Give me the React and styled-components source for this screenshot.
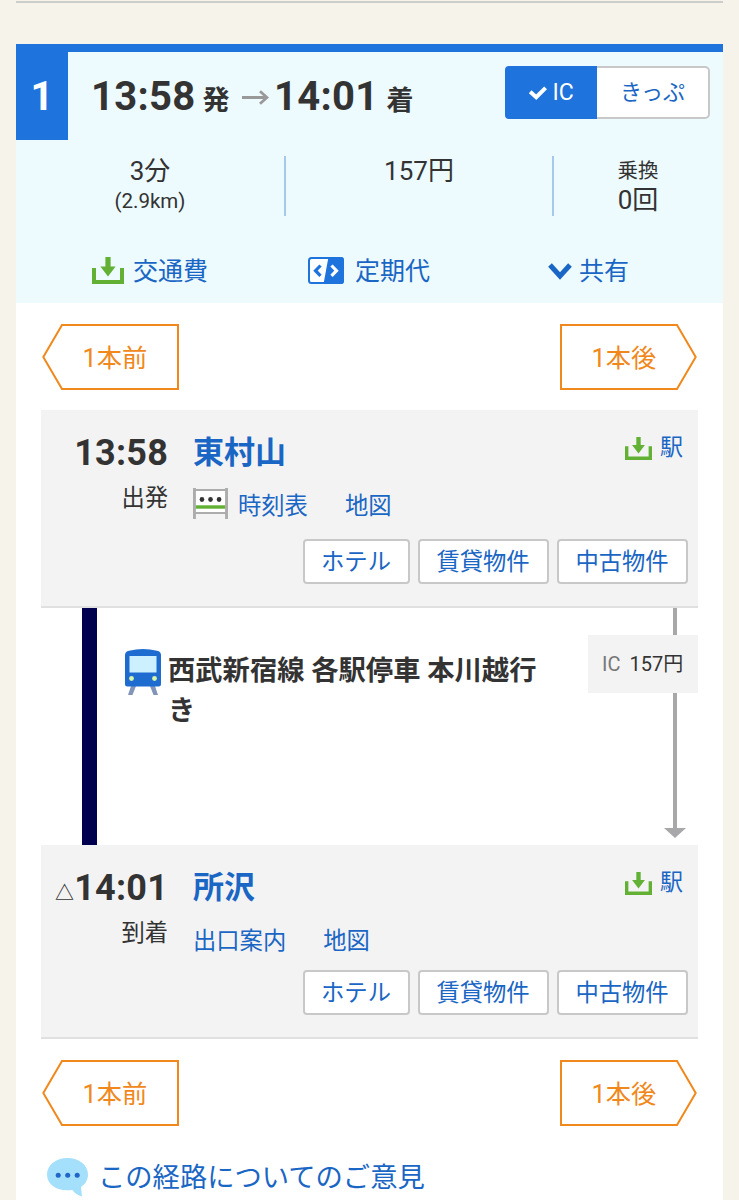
import React from "react";
import styled, { createGlobalStyle } from "styled-components";

const color = {
  blue: "#1f73dc",
  link: "#1a66c4",
  ink: "#333333",
  orange: "#f0881c",
  green: "#62b135",
  panel: "#f3f3f3",
  border: "#c8c8c8",
  lane: "#a8a8ab",
};

const GlobalStyle = createGlobalStyle`
  * { box-sizing: border-box; }
  body {
    margin: 0;
    background: #f6f3ea;
    color: ${color.ink};
    font-family: Roboto, "Noto Sans CJK JP", sans-serif;
    font-weight: 400;
  }
  a { color: ${color.link}; text-decoration: none; }
  svg { display: block; flex: none; }
`;

const Page = styled.div`
  height: 1200px;
  overflow: hidden;
  padding: 1px 16px 0 16px;
`;

const Rule = styled.div`
  height: 2px;
  margin-bottom: 41px;
  background: #cbcecb;
`;

const Card = styled.article`
  height: 1156px;
  border-top: 8px solid ${color.blue};
  background: #fff;
`;

const Summary = styled.header`
  height: 251px;
  background: #edfafe;
`;

const Headline = styled.div`
  display: flex;
  height: 88px;
`;

const Rank = styled.div`
  width: 52px;
  padding-top: 23px;
  background: ${color.blue};
  color: #fff;
  font-size: 40px;
  font-weight: 700;
  line-height: 44px;
  text-align: center;
`;

const Times = styled.div`
  display: flex;
  align-items: baseline;
  width: 437px;
  padding: 23px 0 0 23px;
  font-size: 40px;
  font-weight: 700;
  letter-spacing: 0.3px;
  line-height: 44px;
  white-space: nowrap;

  svg {
    align-self: flex-start;
    margin: 15px 5px 0 0;
  }
`;

const TimeMark = styled.span`
  margin: ${(p) => p.$margin};
  font-size: 27px;
`;

const Toggle = styled.div`
  display: flex;
  width: 205px;
  height: 53px;
  margin-top: 14px;
`;

const ToggleOption = styled.button`
  display: flex;
  align-items: center;
  justify-content: center;
  gap: 5px;
  width: ${(p) => (p.$active ? 92 : 113)}px;
  padding: 0 0 ${(p) => (p.$active ? 0 : 6)}px;
  border: 2px solid ${(p) => (p.$active ? color.blue : color.border)};
  border-left-width: ${(p) => (p.$active ? 2 : 0)}px;
  border-radius: ${(p) => (p.$active ? "4px 0 0 4px" : "0 5px 5px 0")};
  background: ${(p) => (p.$active ? color.blue : "#fff")};
  color: ${(p) => (p.$active ? "#fff" : color.link)};
  font-family: inherit;
  font-size: ${(p) => (p.$active ? 23 : 22)}px;
`;

const Stats = styled.div`
  display: grid;
  grid-template-columns: 270px 268px 168px;
  height: 60px;
  margin-top: 16px;
`;

const Stat = styled.div`
  border-right: ${(p) => (p.$last ? "none" : "2px solid #a5c9ea")};
  font-size: 26px;
  line-height: ${(p) => (p.$last ? 29 : 30)}px;
  text-align: center;
`;

const StatNote = styled.div`
  font-size: 20.5px;
  line-height: 30px;
`;

const Actions = styled.nav`
  display: flex;
  height: 40px;
  margin-top: 36px;
  padding-left: 76px;
`;

const Action = styled.a`
  display: flex;
  align-items: center;
  gap: ${(p) => p.$gap}px;
  width: ${(p) => p.$width}px;
  font-size: 25px;
  line-height: 40px;
  white-space: nowrap;

  svg { margin-bottom: 3px; }
`;

const Shift = styled.div`
  display: flex;
  justify-content: space-between;
  padding: 21px 26px 0 26px;
`;

const ShiftLink = styled.a`
  position: relative;
  display: block;
  width: 137px;
  height: 66px;
  padding-left: ${(p) => (p.$back ? 9 : 0)}px;
  padding-right: ${(p) => (p.$back ? 0 : 9)}px;
  font-size: 25.3px;
  line-height: 69px;
  text-align: center;

  && { color: ${color.orange}; }
  svg { position: absolute; inset: 0; }
`;

const Route = styled.section`
  margin: 20px 25px 0 25px;
`;

const Station = styled.div`
  display: grid;
  grid-template-columns: 127px 1fr;
  column-gap: 25px;
  align-content: start;
  height: ${(p) => p.$height}px;
  padding: 18px 10px 0 0;
  border-bottom: 2px solid #e0e0e0;
  background: ${color.panel};
`;

const StationTime = styled.div`
  display: flex;
  align-items: baseline;
  justify-content: flex-end;
  height: 48px;
  font-size: 36px;
  font-weight: 700;
  letter-spacing: 0.2px;
  line-height: 50px;
  white-space: nowrap;
`;

const Approx = styled.span`
  font-size: 19px;
  font-weight: 500;
  line-height: 1;
`;

const StationRow = styled.div`
  display: flex;
  justify-content: space-between;
  height: 48px;
`;

const StationName = styled.a`
  font-size: 31px;
  font-weight: 700;
  line-height: 50px;
`;

const StationSave = styled.a`
  display: flex;
  align-items: flex-start;
  gap: 8px;
  padding-right: 5px;
  font-size: 23px;
  line-height: 40px;

  svg { margin-top: 9px; }
`;

const StationPhase = styled.div`
  font-size: 23.3px;
  line-height: 44px;
  text-align: right;
`;

const StationLinks = styled.div`
  display: flex;
  align-items: flex-start;
  gap: 37px;
  height: 62px;
  font-size: 23.3px;
  line-height: 60px;

  svg { margin-top: 12px; }
`;

const TimetableLink = styled.a`
  display: flex;
  gap: 10px;
`;

const Chips = styled.div`
  display: flex;
  grid-column: 1 / -1;
  justify-content: flex-end;
  gap: 8px;
  margin-top: ${(p) => p.$top}px;
`;

const Chip = styled.a`
  width: ${(p) => p.$width}px;
  height: 45px;
  padding-right: 1px;
  border: 2px solid ${color.border};
  border-radius: 4px;
  background: #fff;
  font-size: 23.3px;
  line-height: 43px;
  text-align: center;
`;

const Segment = styled.div`
  display: flex;
  height: 237px;
`;

const LineBar = styled.div`
  width: 15px;
  margin: 0 28px 0 41px;
  background: #00004f;
`;

const LineInfo = styled.div`
  display: flex;
  gap: 7px;
  width: 463px;
  padding-top: 41px;
`;

const LineName = styled.div`
  width: 380px;
  padding-top: 2px;
  font-size: 27.3px;
  font-weight: 700;
  line-height: 40px;
`;

const FareLane = styled.div`
  display: flex;
  flex-direction: column;
  width: 110px;
`;

const LaneLine = styled.div`
  width: 4px;
  height: ${(p) => p.$height}px;
  margin-left: 85px;
  background: ${color.lane};
`;

const LaneArrow = styled.div`
  width: 22px;
  height: 10px;
  margin-left: 76px;
  background: ${color.lane};
  clip-path: polygon(0 0, 100% 0, 50% 100%);
`;

const Fare = styled.div`
  display: flex;
  gap: 9px;
  height: 58px;
  padding-left: 14px;
  background: ${color.panel};
  font-size: 20px;
  line-height: 58px;
  white-space: nowrap;
`;

const FareKind = styled.span`
  color: #777;
`;

const Feedback = styled.a`
  display: flex;
  align-items: flex-start;
  gap: 10px;
  margin: 29px 0 0 31px;
  font-size: 27.3px;
  line-height: 46px;

  svg { margin-top: 3px; }
`;

function SaveIcon({ width = 32, height = 27 }) {
  return (
    <svg width={width} height={height} viewBox="0 0 32 27" preserveAspectRatio="none" fill={color.green}>
      <path d="M0 11h4v12h24V11h4v16H0z" />
      <path d="M13.4 0h5.2v9.5h5L16 19.5 8.4 9.5h5z" />
    </svg>
  );
}

function PassIcon() {
  return (
    <svg width="36" height="27" viewBox="0 0 36 27" fill="none">
      <rect x="1" y="1" width="34" height="25" rx="2.5" fill="#fff" stroke={color.blue} strokeWidth="2" />
      <path d="M20.5 0H33a3 3 0 0 1 3 3v21a3 3 0 0 1-3 3H15.5z" fill={color.blue} />
      <path d="M12.5 8.5l-5 5.2 5 5.2" stroke={color.blue} strokeWidth="3.2" />
      <path d="M23.5 8.5l5 5.2-5 5.2" stroke="#fff" strokeWidth="3.2" />
    </svg>
  );
}

function ChevronIcon() {
  return (
    <svg width="24" height="18" viewBox="0 0 24 18" fill="none">
      <path d="M2 3l10 11L22 3" stroke={color.link} strokeWidth="5" />
    </svg>
  );
}

function CheckIcon() {
  return (
    <svg width="19" height="15" viewBox="0 0 19 15" fill="none">
      <path d="M2.2 6.8l6 5.4L17.6 2.8" stroke="#fff" strokeWidth="4" />
    </svg>
  );
}

function ArrowIcon() {
  return (
    <svg width="27" height="15" viewBox="0 0 27 15" fill="none" stroke="#999" strokeWidth="2.8">
      <path d="M0 7.5h25M18 1.2l7 6.3-7 6.3" />
    </svg>
  );
}

function TimetableIcon() {
  return (
    <svg width="35" height="31" viewBox="0 0 36 31" preserveAspectRatio="none">
      <rect x="2" y="2" width="32" height="24" fill="#fff" />
      <path d="M0 0h3v1h30V0h3v31h-3v-5H3v5H0z M3 3v21h30V3z" fill="#adadad" fillRule="evenodd" />
      <rect x="3" y="17.3" width="30" height="3.4" fill={color.green} />
      <g fill="#333">
        <circle cx="9.2" cy="11.5" r="2.4" />
        <circle cx="18" cy="11.5" r="2.4" />
        <circle cx="26.8" cy="11.5" r="2.4" />
      </g>
    </svg>
  );
}

function TrainIcon() {
  return (
    <svg width="36" height="46" viewBox="0 0 36 46">
      <path d="M6 37h5L7.5 46H3zM25 37h5l3 9h-4.5z" fill="#8295b8" />
      <path d="M0 6Q0 2.5 4 1.7Q18-1.7 32 1.7Q36 2.5 36 6V35a2.5 2.5 0 0 1-2.5 2.5H2.5A2.5 2.5 0 0 1 0 35z" fill="#1f6cd0" />
      <rect x="4.5" y="7" width="27" height="16.5" fill="#cdf0ff" />
      <circle cx="6.5" cy="29.5" r="2.4" fill="#d8f6a8" />
      <circle cx="29.5" cy="29.5" r="2.4" fill="#d8f6a8" />
    </svg>
  );
}

function CommentIcon() {
  return (
    <svg width="41" height="39" viewBox="0 0 41 39">
      <path d="M20.5 0C32 0 41 7 41 16.5c0 5.5-2.500 9.500-7 12.500l1 9.500c-4-1-7.500-3.500-9.500-6.500C11.500 34 0 27.500 0 16.500 0 7 9 0 20.500 0z" fill="#a4e0fc" />
      <g fill="#1f66c8">
        <circle cx="11.2" cy="17.3" r="2.5" />
        <circle cx="20.7" cy="17.3" r="2.5" />
        <circle cx="30.2" cy="17.3" r="2.5" />
      </g>
    </svg>
  );
}

function ShiftLinks() {
  return (
    <Shift>
      <ShiftLink href="#" $back>
        <svg width="137" height="66" viewBox="0 0 137 66" fill="none" stroke={color.orange} strokeWidth="2">
          <path d="M1.3 33L20 1H136V65H20z" />
        </svg>
        1本前
      </ShiftLink>
      <ShiftLink href="#">
        <svg width="137" height="66" viewBox="0 0 137 66" fill="none" stroke={color.orange} strokeWidth="2">
          <path d="M135.7 33L117 1H1V65H117z" />
        </svg>
        1本後
      </ShiftLink>
    </Shift>
  );
}

function PropertyChips({ top }) {
  return (
    <Chips $top={top}>
      <Chip href="#" $width={107}>ホテル</Chip>
      <Chip href="#" $width={131}>賃貸物件</Chip>
      <Chip href="#" $width={131}>中古物件</Chip>
    </Chips>
  );
}

function SaveStation() {
  return (
    <StationSave href="#">
      <SaveIcon width={27} height={23} />
      駅
    </StationSave>
  );
}

export default function App() {
  return (
    <>
      <GlobalStyle />
      <Page>
        <Rule />
        <Card>
          <Summary>
            <Headline>
              <Rank>1</Rank>
              <Times>
                13:58
                <TimeMark $margin="0 12px 0 7px">発</TimeMark>
                <ArrowIcon />
                <span>14:01</span>
                <TimeMark $margin="0 0 0 8px">着</TimeMark>
              </Times>
              <Toggle>
                <ToggleOption $active>
                  <CheckIcon />
                  IC
                </ToggleOption>
                <ToggleOption>きっぷ</ToggleOption>
              </Toggle>
            </Headline>
            <Stats>
              <Stat>
                3分
                <StatNote>(2.9km)</StatNote>
              </Stat>
              <Stat>157円</Stat>
              <Stat $last>
                <StatNote>乗換</StatNote>
                0回
              </Stat>
            </Stats>
            <Actions>
              <Action href="#" $gap={9} $width={216}>
                <SaveIcon />
                交通費
              </Action>
              <Action href="#" $gap={11} $width={240}>
                <PassIcon />
                定期代
              </Action>
              <Action href="#" $gap={7} $width={90}>
                <ChevronIcon />
                共有
              </Action>
            </Actions>
          </Summary>

          <ShiftLinks />

          <Route>
            <Station $height={198}>
              <StationTime>13:58</StationTime>
              <StationRow>
                <StationName href="#">東村山</StationName>
                <SaveStation />
              </StationRow>
              <StationPhase>出発</StationPhase>
              <StationLinks>
                <TimetableLink href="#">
                  <TimetableIcon />
                  時刻表
                </TimetableLink>
                <a href="#">地図</a>
              </StationLinks>
              <PropertyChips top={1} />
            </Station>

            <Segment>
              <LineBar />
              <LineInfo>
                <TrainIcon />
                <LineName>西武新宿線 各駅停車 本川越行き</LineName>
              </LineInfo>
              <FareLane>
                <LaneLine $height={27} />
                <Fare>
                  <FareKind>IC</FareKind>
                  <span>157円</span>
                </Fare>
                <LaneLine $height={135} />
                <LaneArrow />
              </FareLane>
            </Segment>

            <Station $height={194}>
              <StationTime>
                <Approx>△</Approx>14:01
              </StationTime>
              <StationRow>
                <StationName href="#">所沢</StationName>
                <SaveStation />
              </StationRow>
              <StationPhase>到着</StationPhase>
              <StationLinks>
                <a href="#">出口案内</a>
                <a href="#">地図</a>
              </StationLinks>
              <PropertyChips top={-3} />
            </Station>
          </Route>

          <ShiftLinks />

          <Feedback href="#">
            <CommentIcon />
            この経路についてのご意見
          </Feedback>
        </Card>
      </Page>
    </>
  );
}
